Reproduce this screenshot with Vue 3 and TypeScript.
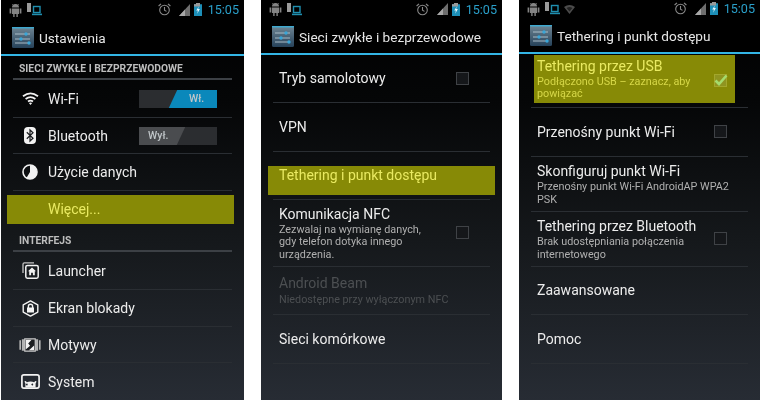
<template>
  <div class="page">
    <section v-for="(phone, p) in phones" :key="p" class="phone" :class="phone.cls">
      <header class="status">
        <svg class="st-android" width="13" height="14" viewBox="0 0 13 14">
          <path d="M3 4.6a3.5 3.5 0 0 1 7 0zM3 5.4h7v5.6H8.8v3H7.4v-3H5.6v3H4.2v-3H3zM.6 5.4h1.7v5H.6zM10.7 5.4h1.7v5h-1.7z" fill="#848484" />
          <path d="M3.2 1 4.6 2.6M9.8 1 8.4 2.6" stroke="#848484" stroke-width=".7" />
        </svg>
        <svg class="st-usb" width="15" height="13" viewBox="0 0 15 13">
          <rect x="0" y="0" width="4" height="9" fill="#9a9a9a" />
          <rect x="6.5" y="3.5" width="6.5" height="6" fill="none" stroke="#1f8fb0" stroke-width="1.4" />
          <rect x="5" y="10.6" width="10" height="1.6" fill="#1f8fb0" />
        </svg>
        <svg v-if="phone.wifiIcon" class="st-wifi" width="11" height="10" viewBox="0 0 11 10">
          <path d="M0 3Q5.5-1.2 11 3L5.5 10z" fill="#4c4c4c" />
          <path d="M2.6 4Q5.5 2 8.4 4L5.5 7.4z" fill="#222" />
        </svg>
        <span class="st-grow"></span>
        <svg class="st-alarm" width="13" height="13" viewBox="0 0 13 13">
          <circle cx="6.5" cy="7" r="4.8" fill="none" stroke="#8a8a8a" stroke-width="1.1" />
          <path d="M6.5 4v3.2l2 1.2M.6 3 3 .9M12.4 3 10 .9" fill="none" stroke="#8a8a8a" stroke-width="1.1" />
        </svg>
        <svg class="st-signal" width="11" height="12" viewBox="0 0 11 12">
          <path d="M0 12 11 0v12z" fill="#6e6e6e" />
          <path d="M0 12 6 5.5V12z" fill="#a8a8a8" />
        </svg>
        <svg class="st-battery" width="8" height="13" viewBox="0 0 8 13">
          <path d="M2.4 0h3.2v1.2H8V13H0V1.2h2.4z" fill="#1d8fb8" />
          <path d="M2 0h4v3.4H0V1.2h2z" fill="#9a9a9a" />
          <path d="M4.8 3.6 2.2 7.6h1.7l-.7 3.2 2.7-4.7H4.2z" fill="#e8f6fb" />
        </svg>
        <span class="time">15:05</span>
      </header>

      <div class="bar">
        <svg class="logo" width="22" height="21" viewBox="0 0 22 21">
          <defs>
            <linearGradient :id="`logo-${p}`" x1="0" y1="0" x2="0" y2="1">
              <stop offset="0" stop-color="#6f8593" />
              <stop offset="1" stop-color="#26425a" />
            </linearGradient>
          </defs>
          <rect x="0" y="0" width="22" height="21" rx="1.5" :fill="`url(#logo-${p})`" />
          <rect x="0" y="0" width="22" height="1.5" fill="#3fa9d0" />
          <path d="M3 7h15M3 12h15M3 16h15" stroke="#b6c6d0" stroke-width=".9" />
          <circle cx="14" cy="7" r="1.7" fill="#39a6d8" />
          <circle cx="9" cy="12" r="1.7" fill="#39a6d8" />
          <circle cx="17" cy="16" r="1.7" fill="#39a6d8" />
        </svg>
        <h1 class="bar-title">{{ phone.title }}</h1>
      </div>
      <div class="blue-line"></div>

      <ul class="list">
        <li
          v-for="row in phone.rows"
          :key="row.title"
          class="row"
          :class="[row.kind, row.hl, { disabled: row.disabled, plain: row.noBorder, 'has-sub': row.sub }]"
          :style="{ height: row.h + 'px' }"
        >
          <span v-if="row.hl" class="hl"></span>

          <span v-if="row.icon" class="ico">
            <svg v-if="row.icon === 'wifi'" width="17" height="13" viewBox="0 0 17 13">
              <path d="M1 4.2Q8.5-1.6 16 4.2M3.6 7q4.9-3.6 9.8 0M6 9.6q2.5-1.8 5 0" fill="none" stroke="#f2f2f2" stroke-width="1.8" />
              <path d="M8.5 13 6.9 11q1.6-1 3.2 0z" fill="#f2f2f2" />
            </svg>
            <svg v-else-if="row.icon === 'bt'" width="12" height="17" viewBox="0 0 12 17">
              <rect width="12" height="17" rx="4" fill="#f2f2f2" />
              <path d="M2.8 5.2 9 11.2 6 14V3l3 2.8-6.2 6" fill="none" stroke="#1a1c1f" stroke-width="1.2" />
            </svg>
            <svg v-else-if="row.icon === 'data'" width="16" height="16" viewBox="0 0 16 16">
              <circle cx="8" cy="8" r="7" fill="none" stroke="#f2f2f2" stroke-width="1.6" />
              <path d="M8 8V1a7 7 0 0 1 0 14 7 7 0 0 1-3.6-1z" fill="#f2f2f2" />
            </svg>
            <svg v-else-if="row.icon === 'launcher'" width="17" height="17" viewBox="0 0 17 17">
              <path d="M1 11V2.2A1.4 1.4 0 0 1 2.4.8H12" fill="none" stroke="#c4c4c4" stroke-width="1.3" />
              <rect x="3.8" y="3.4" width="12.4" height="12.8" rx="1.6" fill="none" stroke="#f2f2f2" stroke-width="1.5" />
              <path d="M10 5.6l4 3.7h-1.2v3.900h-1.900v-2.400H9.100v2.400H7.200V9.300H6z" fill="#f2f2f2" />
            </svg>
            <svg v-else-if="row.icon === 'lock'" width="17" height="17" viewBox="0 0 17 17">
              <path d="M8.5.9 15.8 4.9v7.2L8.5 16.1 1.2 12.1V4.9z" fill="none" stroke="#f2f2f2" stroke-width="1.4" stroke-linejoin="round" />
              <path d="M5.7 7.6V6.400a2.800 2.800 0 0 1 5.600 0v1.200h.7v5H5v-5zM7.100 7.600h2.800V6.400a1.400 1.400 0 0 0-2.800 0z" fill="#f2f2f2" fill-rule="evenodd" />
            </svg>
            <svg v-else-if="row.icon === 'themes'" width="23" height="14" viewBox="0 0 23 14">
              <path d="M.4 2h1.700v10H.4zM3 1h2.200v12H3zM17.800 1H20v12h-2.200zM20.900 2h1.700v10h-1.700z" fill="#b4b4b4" />
              <rect x="6" y=".6" width="11" height="12.800" fill="#1b1d20" stroke="#d8d8d8" stroke-width="1.2" />
              <path d="M7 1.600h6.200L9.600 5.400l2 2.400L7 11.600zM15.800 7.600v4.800h-5.400z" fill="#f2f2f2" />
            </svg>
            <svg v-else-if="row.icon === 'system'" width="19" height="15" viewBox="0 0 19 15">
              <rect x=".9" y=".9" width="17.200" height="13.200" rx="2" fill="none" stroke="#f2f2f2" stroke-width="1.7" />
              <path d="M4.400 13.600V9.400l-1-2 1.400-.4 1 1.200Q9.500 6.800 13.200 8.200l1-1.200 1.400.4-1 2v4.200zM6.700 10.400a.9.9 0 1 0 0 .1zM12.200 10.400a.9.9 0 1 0 0 .1z" fill="#f2f2f2" fill-rule="evenodd" />
            </svg>
          </span>

          <span class="txt">
            <span class="ttl">{{ row.title }}</span>
            <span v-if="row.sub" class="sub">{{ row.sub }}</span>
          </span>

          <span v-if="row.toggle === 'on'" class="toggle on"><i class="lit"></i><b>Wł.</b></span>
          <span v-if="row.toggle === 'off'" class="toggle off"><i class="dim"></i><b>Wył.</b></span>
          <span v-if="row.check" class="check" :class="{ checked: row.check === 'on' }">
            <svg v-if="row.check === 'on'" width="14" height="12" viewBox="0 0 14 12">
              <path d="M1.500 6.500 5 10l7.500-8.500" fill="none" stroke="#a5dc6c" stroke-width="2.6" />
            </svg>
          </span>
        </li>
      </ul>
    </section>
  </div>
</template>

<script setup lang="ts">
interface Row {
  title: string
  h: number
  kind?: string
  sub?: string
  icon?: string
  hl?: string
  toggle?: 'on' | 'off'
  check?: 'on' | 'off'
  disabled?: boolean
  noBorder?: boolean
}

interface Phone {
  cls: string
  title: string
  wifiIcon?: boolean
  rows: Row[]
}

const phones: Phone[] = [
  {
    cls: 'one',
    title: 'Ustawienia',
    rows: [
      { title: 'SIECI ZWYKŁE I BEZPRZEWODOWE', kind: 'section', h: 24 },
      { title: 'Wi-Fi', icon: 'wifi', toggle: 'on', h: 38 },
      { title: 'Bluetooth', icon: 'bt', toggle: 'off', h: 36 },
      { title: 'Użycie danych', icon: 'data', h: 37 },
      { title: 'Więcej...', icon: 'none', hl: 'hl-more', h: 36, noBorder: true },
      { title: 'INTERFEJS', kind: 'section', h: 25 },
      { title: 'Launcher', icon: 'launcher', h: 38 },
      { title: 'Ekran blokady', icon: 'lock', h: 37 },
      { title: 'Motywy', icon: 'themes', h: 36 },
      { title: 'System', icon: 'system', h: 37, noBorder: true }
    ]
  },
  {
    cls: 'two',
    title: 'Sieci zwykłe i bezprzewodowe',
    rows: [
      { title: 'Tryb samolotowy', check: 'off', h: 48 },
      { title: 'VPN', h: 49 },
      { title: 'Tethering i punkt dostępu', hl: 'hl-teth', h: 48 },
      {
        title: 'Komunikacja NFC',
        sub: 'Zezwalaj na wymianę danych,\ngdy telefon dotyka innego\nurządzenia.',
        check: 'off',
        h: 67
      },
      { title: 'Android Beam', sub: 'Niedostępne przy wyłączonym NFC', disabled: true, h: 48 },
      { title: 'Sieci komórkowe', h: 49 }
    ]
  },
  {
    cls: 'three',
    title: 'Tethering i punkt dostępu',
    wifiIcon: true,
    rows: [
      {
        title: 'Tethering przez USB',
        sub: 'Podłączono USB – zaznacz, aby\npowiązać',
        check: 'on',
        hl: 'hl-usb',
        h: 54
      },
      { title: 'Przenośny punkt Wi-Fi', check: 'off', h: 49 },
      { title: 'Skonfiguruj punkt Wi-Fi', sub: 'Przenośny punkt Wi-Fi AndroidAP WPA2\nPSK', h: 55 },
      {
        title: 'Tethering przez Bluetooth',
        sub: 'Brak udostępniania połączenia\ninternetowego',
        check: 'off',
        h: 55
      },
      { title: 'Zaawansowane', h: 48 },
      { title: 'Pomoc', h: 49 }
    ]
  }
]
</script>

<style>
html,
body {
  margin: 0;
  background: #fff;
}
</style>

<style scoped>
.page {
  width: 760px;
  height: 400px;
  overflow: hidden;
  display: flex;
  gap: 17px;
  padding-left: 1px;
  box-sizing: border-box;
  font-family: Roboto, "Liberation Sans", sans-serif;
}

.phone {
  width: 241px;
  height: 400px;
  flex: none;
  color: #ececec;
  background: linear-gradient(#000 0, #050607 25%, #15181b 60%, #272c34 100%);
  filter: blur(0.3px);
}

.phone.one {
  width: 243px;
}

.status {
  display: flex;
  align-items: center;
  background: #000;
  padding: 0 5px 0 8px;
  box-sizing: border-box;
  height: 19px;
}

.two .status {
  height: 18px;
}

.three .status {
  height: 17px;
}

.st-usb {
  margin-left: 5px;
}

.st-wifi {
  margin-left: 4px;
}

.st-grow {
  flex: 1;
}

.st-signal {
  margin-left: 8px;
}

.st-battery {
  margin-left: 4px;
}

.time {
  margin-left: 6px;
  font-size: 12.6px;
  color: #2a9fc9;
}

.bar {
  height: 35px;
  display: flex;
  align-items: center;
  padding-left: 11px;
  background: #000;
}

.logo {
  margin-top: 2px;
  flex: none;
}

.bar-title {
  margin: 2px 0 0 5px;
  font-size: 13.6px;
  font-weight: 400;
  color: #e6e6e6;
  white-space: nowrap;
}

.three .bar-title {
  margin-top: 3px;
}

.blue-line {
  height: 2px;
  background: #33b5e5;
}

.list {
  list-style: none;
  margin: 0;
  padding: 0 12px;
}

.row {
  position: relative;
  display: flex;
  align-items: center;
  padding: 0 6px;
  box-sizing: border-box;
  border-bottom: 1px solid #2a2e33;
}

.two .row,
.three .row {
  padding-bottom: 1px;
}

.row.plain {
  border-bottom: none;
}

.row.section {
  align-items: flex-end;
  padding-bottom: 3px;
  border-bottom: 2px solid #3c4045;
  font-weight: 700;
  color: #bdbdbd;
}

.row.section .ttl {
  font-size: 10.3px;
  line-height: 12px;
}

.ico {
  width: 22px;
  margin-right: 7px;
  flex: none;
  display: flex;
  justify-content: center;
}

.txt {
  position: relative;
  flex: 1;
  min-width: 0;
  display: flex;
  flex-direction: column;
}

.has-sub .txt {
  padding-top: 2px;
}

.ttl {
  font-size: 14px;
  line-height: 16px;
}

.sub {
  font-size: 10.8px;
  line-height: 12.5px;
  margin-top: 2px;
  color: #b0b0b0;
  white-space: pre-line;
}

.disabled .ttl,
.disabled .sub {
  color: #4c4f52;
}

.disabled .sub {
  margin-top: 3px;
}

.hl {
  position: absolute;
  background: #878a06;
}

.hl-more .hl {
  left: -6px;
  right: -2px;
  top: 4px;
  height: 29px;
}

.hl-teth .hl {
  left: -5px;
  right: -5px;
  top: 14px;
  height: 29px;
}

.hl-usb .hl {
  left: 3px;
  right: 13px;
  top: 1px;
  height: 48px;
}

.hl-more .ttl,
.hl-teth .ttl,
.hl-usb .ttl {
  color: #e9ea62;
}

.hl-usb .sub {
  color: #d6d748;
}

.hl-usb .txt {
  top: -2px;
}

.toggle {
  position: relative;
  width: 78px;
  height: 18px;
  margin-right: 9px;
  background: #2b2d30;
  font-size: 10.5px;
  flex: none;
  overflow: hidden;
}

.toggle i {
  position: absolute;
  top: 0;
  bottom: 0;
  transform: skewX(-25deg);
}

.toggle .lit {
  left: 34px;
  width: 52px;
  background: #0a88bb;
}

.toggle .dim {
  left: -6px;
  width: 48px;
  background: #4a4c4f;
}

.toggle b {
  position: absolute;
  top: 2px;
  font-weight: 500;
  color: #c0c6c9;
}

.toggle.on b {
  left: 50px;
}

.toggle.off b {
  left: 9px;
}

.check {
  position: relative;
  width: 11px;
  height: 11px;
  margin-right: 15px;
  flex: none;
  border: 1px solid #3f4246;
  background: #15171a;
}

.check.checked {
  background: #8f9420;
  border-color: #a3a72c;
}

.check svg {
  position: absolute;
  left: -1px;
  top: -1px;
}
</style>
